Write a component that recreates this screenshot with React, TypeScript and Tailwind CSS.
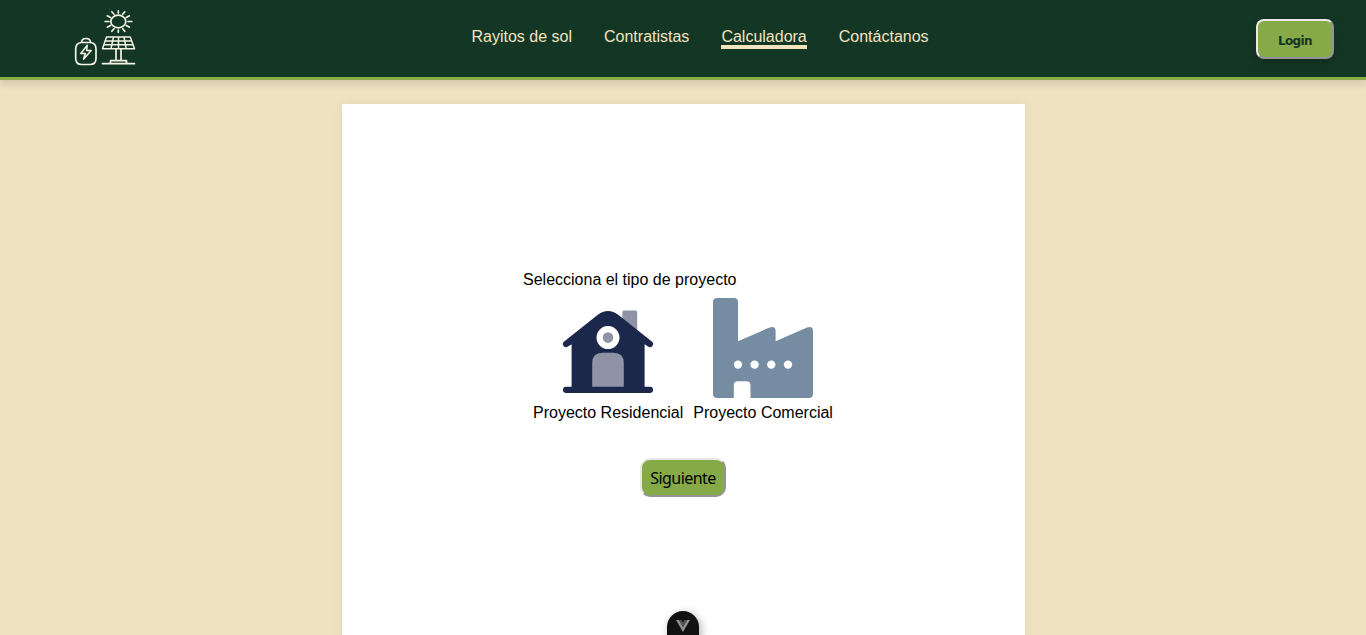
const links = ['Rayitos de sol', 'Contratistas', 'Calculadora', 'Contáctanos'];

function Logo() {
  return (
    <svg width="90" height="77" viewBox="0 0 90 77" fill="none" stroke="#f3f4e4" strokeWidth="1.7" strokeLinecap="round" strokeLinejoin="round">
      <path d="M21.5 42.5H30.5Q36 43 36 49V58.5Q36 64.5 30 64.5H21.7Q15.7 64.5 15.7 58.5V49Q15.7 43 21.5 42.5Z" />
      <path d="M21.5 42C22 37.3 30 37.3 30.5 42" />
      <path d="M27.2 45.3L20.8 53.5H25.3L23.5 59.3L31.2 50.6H26.6Z" strokeWidth="1.5" />
      <ellipse cx="58.3" cy="21.5" rx="7.5" ry="6.3" />
      <path d="M58.3 10.8V13M58.3 30V32.3M45.2 21.5H49M68 21.5H71.8M47.3 15.8L50.5 17.5M66.3 25.5L69.4 27.2M47.3 27.2L50.5 25.5M66.3 17.5L69.4 15.8M51.8 11.8L54 14.3M62.7 28.7L64.8 31.3M51.8 31.3L54 28.7M62.7 14.3L64.8 11.8" />
      <path d="M46.5 37H70.3L74.5 48.7H42.5ZM45.2 41H71.8M43.8 44.8H73.2M53.5 37L51 48.7M64 37L66.2 48.7M58.5 37V48.7" strokeWidth="1.5" />
      <path d="M56 49.3V60.5M61 49.3V60.5M50.5 63.5V60.7H66.5V63.5M42.5 63.7H74.5" />
    </svg>
  );
}

function House() {
  return (
    <svg width="100" height="100" viewBox="0 0 100 100">
      <path d="M64.3 35V14Q64.3 12.4 66 12.4H77.5Q79.2 12.4 79.2 14V38Z" fill="#8e93a6" />
      <path d="M39.5 16.9Q50 9.3 60.5 16.9L93.8 43.5A3.1 3.1 0 0 1 90 48.5L86.6 46.2V88.7H91.9A3.1 3.1 0 0 1 91.9 95H8.1A3.1 3.1 0 0 1 8.1 88.7H13.6V46.2L10 48.5A3.1 3.1 0 0 1 6.2 43.5Z" fill="#1c274c" />
      <path d="M34.2 88.7V65Q34.2 54.7 44.5 54.7H55.5Q65.8 54.7 65.8 65V88.7Z" fill="#8e93a6" />
      <circle cx="50" cy="39.6" r="11.5" fill="#fff" />
      <circle cx="50" cy="39.6" r="5.3" fill="#8e93a6" />
    </svg>
  );
}

function Factory() {
  return (
    <svg width="100" height="100" viewBox="0 0 100 100" fill="#768ca3">
      <path d="M4.2 0H20.8Q25 0 25 4.2V43.3L56.5 29.6Q62.6 27.5 62.6 33.3V43.3L94 29.6Q100 27.5 100 33.3V95.8Q100 100 95.8 100H37.5V87.3Q37.5 83.2 33.3 83.2H25Q20.8 83.2 20.8 87.3V100H4.2Q0 100 0 95.8V4.2Q0 0 4.2 0Z" />
      <g fill="#fff">
        <circle cx="25" cy="66.6" r="4.2" />
        <circle cx="41.6" cy="66.6" r="4.2" />
        <circle cx="58.3" cy="66.6" r="4.2" />
        <circle cx="75" cy="66.6" r="4.2" />
      </g>
    </svg>
  );
}

export default function App() {
  return (
    <div className="relative flex h-[635px] flex-col overflow-hidden bg-[#efe2c0] font-['Liberation_Sans',sans-serif] text-base text-black">
      <header className="relative z-10 flex h-20 shrink-0 items-start justify-between border-b-3 border-[#86aa48] bg-[#143625] pr-8 pl-[60px] shadow-[0_4px_8px_rgba(0,0,0,0.12)]">
        <Logo />
        <nav className="mt-[25px] ml-[321.5px] flex flex-1 gap-8">
          {links.map((link) => (
            <a key={link} href="#" className={`h-6 leading-6 whitespace-nowrap text-[#f2e3c0] ${link === 'Calculadora' ? 'border-b-4 border-[#f2e3c0]' : ''}`}>
              {link}
            </a>
          ))}
        </nav>
        <button className="mt-[19px] h-10 w-[78px] rounded-lg border-2 border-[#e8e8e8] [border-style:outset] bg-[#86aa48] pt-[3px] font-['DejaVu_Sans',sans-serif] text-[12px] font-bold tracking-[-0.6px] text-[#143625] shadow-[0_4px_8px_rgba(0,0,0,0.2)]">
          Login
        </button>
      </header>
      <main className="mx-auto mt-6 flex h-[700px] w-[683px] shrink-0 flex-col items-center bg-white pt-[164px] shadow-[0_0_10px_rgba(0,0,0,0.06)]">
        <section className="w-80">
          <p className="leading-6">Selecciona el tipo de proyecto</p>
          <div className="mt-1.5 flex gap-2.5 pl-2.5 whitespace-nowrap">
            <div className="flex flex-col items-center">
              <House />
              <span className="mt-[3px] leading-6">Proyecto Residencial</span>
            </div>
            <div className="flex flex-col items-center">
              <Factory />
              <span className="mt-[3px] leading-6">Proyecto Comercial</span>
            </div>
          </div>
        </section>
        <button className="mt-[33px] h-[39px] w-[86px] rounded-[10px] border-2 border-[#e8e8e8] [border-style:outset] bg-[#86aa48] font-['Noto_Sans',sans-serif] text-base tracking-[-0.55px]">
          Siguiente
        </button>
      </main>
      <div className="absolute top-[611px] left-[667px] flex h-[30px] w-8 justify-center rounded-t-full bg-[#111] pt-[9px] shadow-[2px_2px_8px_rgba(0,0,0,0.3)]">
        <svg width="14" height="12" viewBox="0 0 14 12">
          <path d="M0 0H3L7 7L11 0H14L7 12Z" fill="#909090" />
          <path d="M3 0H5.5L7 2.5L8.5 0H11L7 7Z" fill="#555" />
        </svg>
      </div>
    </div>
  );
}
